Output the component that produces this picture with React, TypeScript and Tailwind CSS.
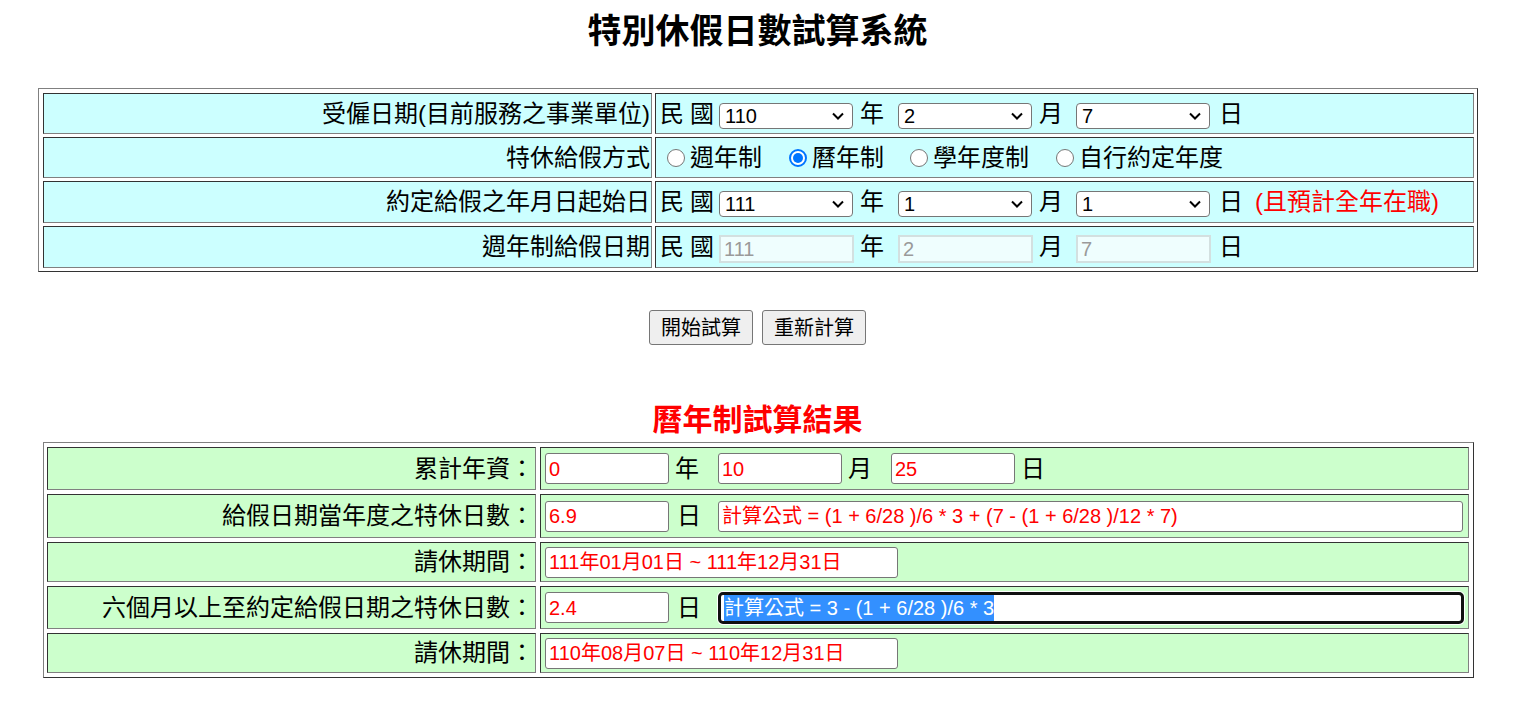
import React from "react";

const cellTop =
  "border border-t-[#333333] border-l-[#333333] border-r-[#808080] border-b-[#808080] bg-[#ccffff] flex items-center";
const cellBot =
  "border border-t-[#333333] border-l-[#333333] border-r-[#808080] border-b-[#808080] bg-[#ccffcc] flex items-center";

function Sel({ v, className = "" }: { v: string; className?: string }) {
  return (
    <div
      className={
        "w-[134px] h-[26px] shrink-0 flex items-center justify-between border border-[#767676] rounded-[4px] bg-white pl-[5px] pr-[8px] text-[20px] leading-none text-black font-['Liberation_Sans',sans-serif] " +
        className
      }
    >
      <span>{v}</span>
      <svg width="12" height="8" viewBox="0 0 12 8">
        <path d="M1 1.5L6 6.5L11 1.5" fill="none" stroke="#000" strokeWidth="2" />
      </svg>
    </div>
  );
}

function DIn({ v, className = "" }: { v: string; className?: string }) {
  return (
    <div
      className={
        "w-[135px] h-[28px] shrink-0 flex items-center border-2 border-[#d3e0e0] bg-[#effefe] pl-[3px] text-[20px] leading-none text-[#9a9a9a] font-['Liberation_Sans',sans-serif] " +
        className
      }
    >
      {v}
    </div>
  );
}

function In({ v, w, className = "" }: { v: string; w: string; className?: string }) {
  return (
    <div
      className={
        "h-[31px] shrink-0 flex items-center border border-[#767676] rounded-[3px] bg-white pl-[3px] text-[20px] leading-none text-[#ff0000] whitespace-pre " +
        w +
        " " +
        className
      }
    >
      {v}
    </div>
  );
}

function Radio({ checked = false, className = "" }: { checked?: boolean; className?: string }) {
  if (checked) {
    return (
      <div
        className={
          "w-[18px] h-[18px] shrink-0 rounded-full border-2 border-[#0075ff] bg-white flex items-center justify-center " +
          className
        }
      >
        <div className="w-[10px] h-[10px] rounded-full bg-[#0075ff]" />
      </div>
    );
  }
  return (
    <div
      className={
        "w-[18px] h-[18px] shrink-0 rounded-full border border-[#767676] bg-white " + className
      }
    />
  );
}

function Label({ text, h, bot = false }: { text: string; h: string; bot?: boolean }) {
  return (
    <div className={(bot ? cellBot : cellTop) + " justify-end pr-px " + h}>
      <span className="leading-[24px] whitespace-pre">{text}</span>
    </div>
  );
}

export default function App() {
  return (
    <div className="min-h-[719px] bg-white text-black font-['Liberation_Sans','Noto_Sans_CJK_TC',sans-serif] text-[24px]">
      <div className="pt-[13px] h-[49px] text-center leading-[36px] text-[34px] font-bold">
        特別休假日數試算系統
      </div>

      {/* Top table */}
      <div className="mt-[39px] ml-[38px] w-[1440px] border border-t-[#808080] border-l-[#808080] border-r-[#333333] border-b-[#333333] pt-[4px] pl-[4px] pr-[3px] pb-[3px] grid grid-cols-[609px_819px] gap-[3px]">
        <Label text="受僱日期(目前服務之事業單位)" h="h-[41px]" />
        <div className={cellTop + " h-[41px] pl-[4px] leading-[24px]"}>
          <span>民</span>
          <span className="ml-[6px]">國</span>
          <Sel v="110" className="ml-[5px] mt-[5px]" />
          <span className="ml-[7px]">年</span>
          <Sel v="2" className="ml-[14px] mt-[5px]" />
          <span className="ml-[7px]">月</span>
          <Sel v="7" className="ml-[13px] mt-[5px]" />
          <span className="ml-[9px]">日</span>
        </div>

        <Label text="特休給假方式" h="h-[41px]" />
        <div className={cellTop + " h-[41px] leading-[24px]"}>
          <Radio className="ml-[11px]" />
          <span className="ml-[5px]">週年制</span>
          <Radio checked className="ml-[27px]" />
          <span className="ml-[5px]">曆年制</span>
          <Radio className="ml-[26px]" />
          <span className="ml-[5px]">學年度制</span>
          <Radio className="ml-[27px]" />
          <span className="ml-[5px]">自行約定年度</span>
        </div>

        <Label text="約定給假之年月日起始日" h="h-[42px]" />
        <div className={cellTop + " h-[42px] pl-[4px] leading-[24px]"}>
          <span>民</span>
          <span className="ml-[6px]">國</span>
          <Sel v="111" className="ml-[5px] mt-[4px]" />
          <span className="ml-[7px]">年</span>
          <Sel v="1" className="ml-[14px] mt-[4px]" />
          <span className="ml-[7px]">月</span>
          <Sel v="1" className="ml-[13px] mt-[4px]" />
          <span className="ml-[9px]">日</span>
          <span className="ml-[12px] text-[#ff0000]">(且預計全年在職)</span>
        </div>

        <Label text="週年制給假日期" h="h-[42px]" />
        <div className={cellTop + " h-[42px] pl-[4px] leading-[24px]"}>
          <span>民</span>
          <span className="ml-[6px]">國</span>
          <DIn v="111" className="ml-[5px] mt-[4px]" />
          <span className="ml-[6px]">年</span>
          <DIn v="2" className="ml-[14px] mt-[4px]" />
          <span className="ml-[6px]">月</span>
          <DIn v="7" className="ml-[13px] mt-[4px]" />
          <span className="ml-[8px]">日</span>
        </div>
      </div>

      {/* Buttons */}
      <div className="mt-[38px] flex justify-center gap-[9px]">
        <button className="w-[104px] h-[35px] bg-[#efefef] border border-[#767676] rounded-[3px] text-[20px] leading-none text-black">
          開始試算
        </button>
        <button className="w-[104px] h-[35px] bg-[#efefef] border border-[#767676] rounded-[3px] text-[20px] leading-none text-black">
          重新計算
        </button>
      </div>

      <div className="mt-[59px] h-[32px] text-center leading-[32px] text-[30px] font-bold text-[#ff0000]">
        曆年制試算結果
      </div>

      {/* Bottom table */}
      <div className="mt-[6px] ml-[43px] w-[1431px] border border-t-[#808080] border-l-[#808080] border-r-[#333333] border-b-[#333333] pt-[4px] pl-[3px] pr-[4px] pb-[4px] grid grid-cols-[489px_929px] gap-[4px]">
        <Label bot text="累計年資：" h="h-[43px]" />
        <div className={cellBot + " h-[43px] leading-[24px]"}>
          <In v="0" w="w-[124px]" className="ml-[4px]" />
          <span className="ml-[6px]">年</span>
          <In v="10" w="w-[124px]" className="ml-[19px]" />
          <span className="ml-[6px]">月</span>
          <In v="25" w="w-[124px]" className="ml-[19px]" />
          <span className="ml-[6px]">日</span>
        </div>

        <Label bot text="給假日期當年度之特休日數：" h="h-[44px]" />
        <div className={cellBot + " h-[44px] leading-[24px]"}>
          <In v="6.9" w="w-[124px]" className="ml-[4px]" />
          <span className="ml-[8px]">日</span>
          <In
            v="計算公式 = (1 + 6/28 )/6 * 3 + (7 - (1 + 6/28 )/12 * 7)"
            w="w-[745px]"
            className="ml-[17px]"
          />
        </div>

        <Label bot text="請休期間：" h="h-[40px]" />
        <div className={cellBot + " h-[40px] leading-[24px]"}>
          <In v="111年01月01日 ~ 111年12月31日" w="w-[353px]" className="ml-[4px]" />
        </div>

        <Label bot text="六個月以上至約定給假日期之特休日數：" h="h-[43px]" />
        <div className={cellBot + " h-[43px] leading-[24px]"}>
          <In v="2.4" w="w-[124px]" className="ml-[4px]" />
          <span className="ml-[8px]">日</span>
          <div className="ml-[17px] w-[746px] h-[32px] shrink-0 flex items-center border-[3px] border-[#101010] rounded-[5px] bg-white pl-[3px] shadow-[0_0_0_1px_#ffffff]">
            <span className="h-[26px] flex items-center bg-[#3390ff] text-white text-[20px] leading-none whitespace-pre">
              計算公式 = 3 - (1 + 6/28 )/6 * 3
            </span>
          </div>
        </div>

        <Label bot text="請休期間：" h="h-[40px]" />
        <div className={cellBot + " h-[40px] leading-[24px]"}>
          <In v="110年08月07日 ~ 110年12月31日" w="w-[353px]" className="ml-[4px]" />
        </div>
      </div>
    </div>
  );
}
